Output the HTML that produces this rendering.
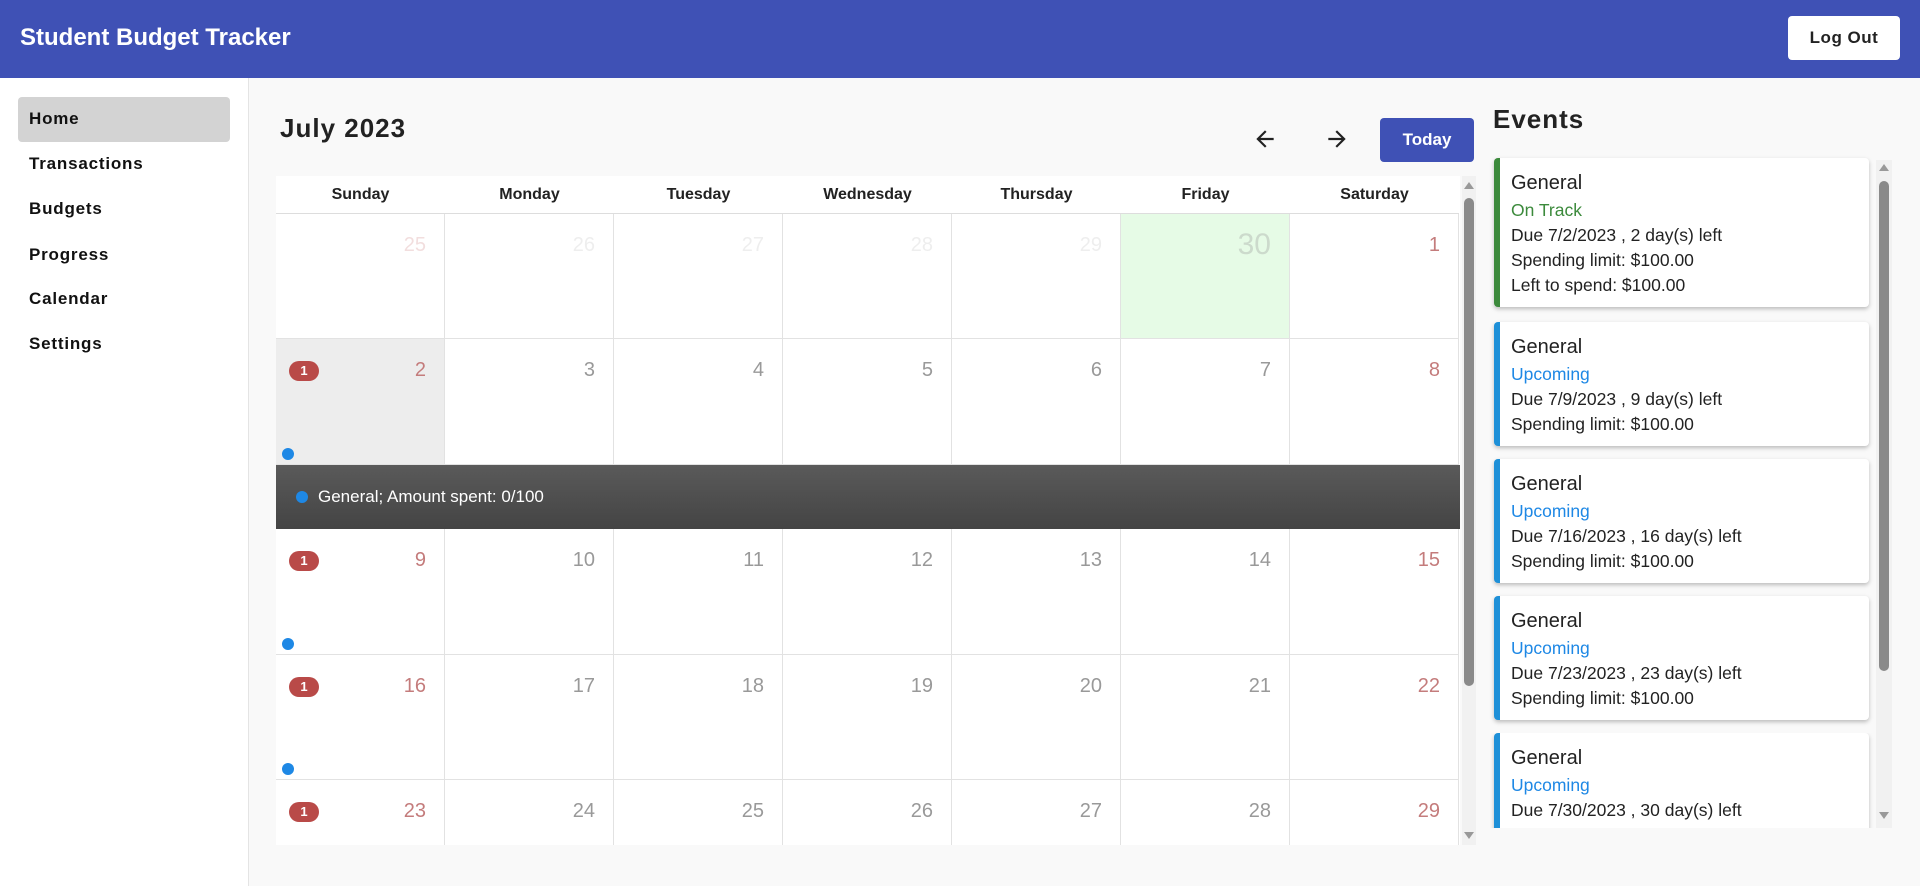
<!DOCTYPE html>
<html><head><meta charset="utf-8"><style>
*{box-sizing:border-box;margin:0;padding:0}
body{width:1920px;height:886px;overflow:hidden;background:#f9f9f9;font-family:"Liberation Sans",sans-serif;color:#222;position:relative}
.hdr{position:absolute;left:0;top:0;width:1920px;height:78px;background:#3f51b5}
.hdr h1{position:absolute;left:20px;top:24px;font-size:24px;color:#fff;font-weight:bold}
.logout{position:absolute;left:1788px;top:16px;width:112px;height:44px;background:#fff;border-radius:4px;font-size:17px;font-weight:bold;text-align:center;line-height:44px;letter-spacing:.5px}
.side{position:absolute;left:0;top:78px;width:249px;height:808px;background:#fff;border-right:1px solid #e4e4e4}
.nav{position:absolute;left:29px;font-size:17px;font-weight:bold;letter-spacing:.8px;color:#111}
.homebg{position:absolute;left:18px;top:97px;width:212px;height:45px;background:#d3d3d3;border-radius:4px}
.title{position:absolute;left:280px;top:113px;font-size:26px;font-weight:bold;letter-spacing:1px}
.arrow{position:absolute;top:126px}
.today{position:absolute;left:1380px;top:118px;width:94px;height:44px;background:#3f51b5;color:#fff;border-radius:4px;font-weight:bold;font-size:17px;text-align:center;line-height:44px}
.cal{position:absolute;left:276px;top:176px;width:1184px;height:669px;background:#fff;overflow:hidden}
.dh{position:absolute;top:0;height:38px;width:169px;text-align:center;line-height:38px;font-weight:bold;font-size:16px;border-bottom:1px solid #ddd}
.c{position:absolute;width:169px;border-right:1px solid #e2e2e2;border-bottom:1px solid #e2e2e2}
.n{position:absolute;right:18px;top:20px;font-size:20px;color:#999}
.w{color:#c47c7c}.f{color:#eee}.fw{color:#f2dede}
.b{position:absolute;left:13px;top:22px;width:30px;height:20px;background:#b94a48;border-radius:10px;color:#fff;font-size:13px;font-weight:bold;text-align:center;line-height:20px}
.d{position:absolute;left:6px;bottom:4px;width:12px;height:12px;border-radius:50%;background:#1e88e5}
.bar{position:absolute;left:0;top:289px;width:1184px;height:64px;background:linear-gradient(#5a5a5a,#444);color:#fff;font-size:17px;line-height:64px;padding-left:42px}
.bar:before{content:"";position:absolute;left:20px;top:26px;width:12px;height:12px;border-radius:50%;background:#1e88e5}
.sb{position:absolute;background:#f1f1f1}
.th{position:absolute;background:#8a8a8a;border-radius:6px}
.ev{position:absolute;left:1493px;top:104px;font-size:26px;font-weight:bold;letter-spacing:1px}
.card{position:absolute;left:1494px;width:375px;background:#fff;border-left:6px solid #1e90d8;border-radius:4px;box-shadow:0 2px 4px rgba(0,0,0,.25);padding:12px 0 0 11px;font-size:17.5px;line-height:25px}
.card .t{font-size:20px;line-height:26px;margin-bottom:2px}
.g{color:#3c8a3c}.u{color:#1e88e5}
</style></head><body>
<div class="hdr"><h1>Student Budget Tracker</h1><div class="logout">Log Out</div></div>
<div class="side"></div>
<div class="homebg"></div>
<div class="nav" style="top:109px">Home</div>
<div class="nav" style="top:154px">Transactions</div>
<div class="nav" style="top:199px">Budgets</div>
<div class="nav" style="top:245px">Progress</div>
<div class="nav" style="top:289px">Calendar</div>
<div class="nav" style="top:334px">Settings</div>
<div class="title">July 2023</div>
<svg class="arrow" style="left:1252px" width="26" height="26" viewBox="0 0 24 24"><path d="M20 11H7.83l5.59-5.59L12 4l-8 8 8 8 1.41-1.41L7.83 13H20v-2z" fill="#222"/></svg>
<svg class="arrow" style="left:1324px" width="26" height="26" viewBox="0 0 24 24"><path d="M12 4l-1.41 1.41L16.17 11H4v2h12.17l-5.58 5.59L12 20l8-8z" fill="#222"/></svg>
<div class="today">Today</div>
<div class="cal">
<div class="dh" style="left:0">Sunday</div><div class="dh" style="left:169px">Monday</div><div class="dh" style="left:338px">Tuesday</div><div class="dh" style="left:507px">Wednesday</div><div class="dh" style="left:676px">Thursday</div><div class="dh" style="left:845px">Friday</div><div class="dh" style="left:1014px">Saturday</div>
<div class="c" style="left:0;top:38px;height:125px"><span class="n fw">25</span></div>
<div class="c" style="left:169px;top:38px;height:125px"><span class="n f">26</span></div>
<div class="c" style="left:338px;top:38px;height:125px"><span class="n f">27</span></div>
<div class="c" style="left:507px;top:38px;height:125px"><span class="n f">28</span></div>
<div class="c" style="left:676px;top:38px;height:125px"><span class="n f">29</span></div>
<div class="c" style="left:845px;top:38px;height:125px;background:#e6fbe6"><span class="n" style="font-size:30px;top:14px;color:#ccdacc">30</span></div>
<div class="c" style="left:1014px;top:38px;height:125px"><span class="n w">1</span></div>
<div class="c" style="left:0;top:163px;height:126px;background:#ededed"><span class="b">1</span><span class="n w">2</span><span class="d"></span></div>
<div class="c" style="left:169px;top:163px;height:126px"><span class="n">3</span></div>
<div class="c" style="left:338px;top:163px;height:126px"><span class="n">4</span></div>
<div class="c" style="left:507px;top:163px;height:126px"><span class="n">5</span></div>
<div class="c" style="left:676px;top:163px;height:126px"><span class="n">6</span></div>
<div class="c" style="left:845px;top:163px;height:126px"><span class="n">7</span></div>
<div class="c" style="left:1014px;top:163px;height:126px"><span class="n w">8</span></div>
<div class="bar">General; Amount spent: 0/100</div>
<div class="c" style="left:0;top:353px;height:126px"><span class="b">1</span><span class="n w">9</span><span class="d"></span></div>
<div class="c" style="left:169px;top:353px;height:126px"><span class="n">10</span></div>
<div class="c" style="left:338px;top:353px;height:126px"><span class="n">11</span></div>
<div class="c" style="left:507px;top:353px;height:126px"><span class="n">12</span></div>
<div class="c" style="left:676px;top:353px;height:126px"><span class="n">13</span></div>
<div class="c" style="left:845px;top:353px;height:126px"><span class="n">14</span></div>
<div class="c" style="left:1014px;top:353px;height:126px"><span class="n w">15</span></div>
<div class="c" style="left:0;top:479px;height:125px"><span class="b">1</span><span class="n w">16</span><span class="d"></span></div>
<div class="c" style="left:169px;top:479px;height:125px"><span class="n">17</span></div>
<div class="c" style="left:338px;top:479px;height:125px"><span class="n">18</span></div>
<div class="c" style="left:507px;top:479px;height:125px"><span class="n">19</span></div>
<div class="c" style="left:676px;top:479px;height:125px"><span class="n">20</span></div>
<div class="c" style="left:845px;top:479px;height:125px"><span class="n">21</span></div>
<div class="c" style="left:1014px;top:479px;height:125px"><span class="n w">22</span></div>
<div class="c" style="left:0;top:604px;height:125px"><span class="b">1</span><span class="n w">23</span></div>
<div class="c" style="left:169px;top:604px;height:125px"><span class="n">24</span></div>
<div class="c" style="left:338px;top:604px;height:125px"><span class="n">25</span></div>
<div class="c" style="left:507px;top:604px;height:125px"><span class="n">26</span></div>
<div class="c" style="left:676px;top:604px;height:125px"><span class="n">27</span></div>
<div class="c" style="left:845px;top:604px;height:125px"><span class="n">28</span></div>
<div class="c" style="left:1014px;top:604px;height:125px"><span class="n w">29</span></div>
</div>
<div class="sb" style="left:1462px;top:176px;width:14px;height:669px"></div>
<div class="th" style="left:1464px;top:198px;width:10px;height:488px"></div>
<div style="position:absolute;left:1464px;top:182px;width:0;height:0;border:5px solid transparent;border-bottom:7px solid #999;border-top:0"></div>
<div style="position:absolute;left:1464px;top:832px;width:0;height:0;border:5px solid transparent;border-top:7px solid #999;border-bottom:0"></div>
<div class="ev">Events</div>
<div class="card" style="top:158px;height:149px;border-left-color:#3c8a3c"><div class="t">General</div><div class="g">On Track</div><div>Due 7/2/2023 , 2 day(s) left</div><div>Spending limit: $100.00</div><div>Left to spend: $100.00</div></div>
<div class="card" style="top:322px;height:124px"><div class="t">General</div><div class="u">Upcoming</div><div>Due 7/9/2023 , 9 day(s) left</div><div>Spending limit: $100.00</div></div>
<div class="card" style="top:459px;height:124px"><div class="t">General</div><div class="u">Upcoming</div><div>Due 7/16/2023 , 16 day(s) left</div><div>Spending limit: $100.00</div></div>
<div class="card" style="top:596px;height:124px"><div class="t">General</div><div class="u">Upcoming</div><div>Due 7/23/2023 , 23 day(s) left</div><div>Spending limit: $100.00</div></div>
<div style="position:absolute;left:1490px;top:733px;width:385px;height:95px;overflow:hidden"><div class="card" style="left:4px;top:0;height:124px"><div class="t">General</div><div class="u">Upcoming</div><div>Due 7/30/2023 , 30 day(s) left</div></div></div>
<div class="sb" style="left:1876px;top:160px;width:16px;height:668px"></div>
<div class="th" style="left:1879px;top:181px;width:10px;height:490px"></div>
<div style="position:absolute;left:1879px;top:164px;width:0;height:0;border:5px solid transparent;border-bottom:7px solid #999;border-top:0"></div>
<div style="position:absolute;left:1879px;top:812px;width:0;height:0;border:5px solid transparent;border-top:7px solid #999;border-bottom:0"></div>
</body></html>
